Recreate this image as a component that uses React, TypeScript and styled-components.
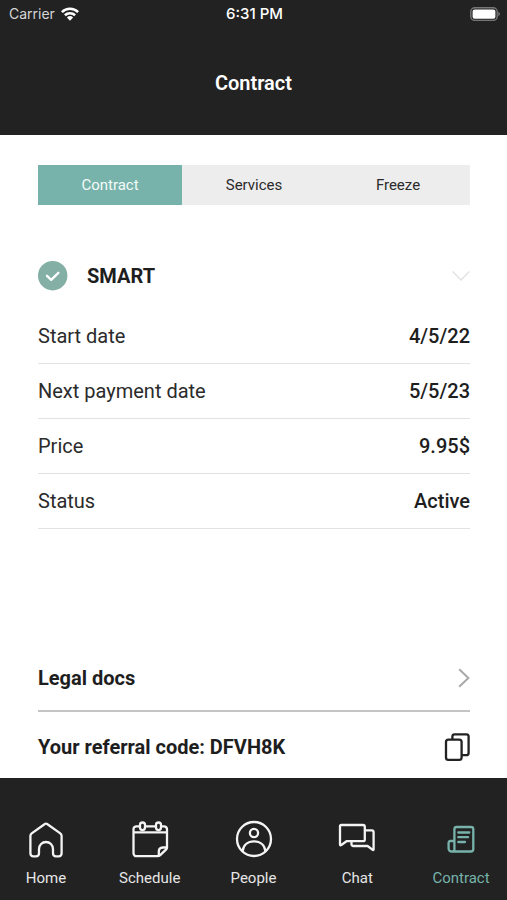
import React from "react";
import styled, { createGlobalStyle } from "styled-components";

const color = {
  dark: "#222222",
  ink: "#2b2b2b",
  strong: "#1e1e1e",
  teal: "#77b3aa",
  badge: "#83afa4",
  tab: "#ededed",
  line: "#e2e2e2",
};

const GlobalStyle = createGlobalStyle`
  * { box-sizing: border-box; }
  body { margin: 0; background: #fff; }
  button { font: inherit; color: inherit; border: 0; padding: 0; background: none; cursor: pointer; }
  h1, h2, dl, dd { margin: 0; }
  svg { display: block; flex: none; }
`;

const Page = styled.div`
  display: flex;
  flex-direction: column;
  min-height: 100vh;
  background: #fff;
  color: ${color.ink};
  font-family: Roboto, "Liberation Sans", sans-serif;
`;

const Header = styled.header`
  height: 135px;
  background: ${color.dark};
  color: #fff;
`;

const StatusBar = styled.div`
  display: grid;
  grid-template-columns: 1fr auto 1fr;
  align-items: center;
  height: 27px;
  padding: 0 7px 0 9px;
  font-family: Inter, sans-serif;
  font-size: 14px;
`;

const Carrier = styled.div`
  display: flex;
  align-items: center;
  gap: 6px;
  color: #d6d6d6;
`;

const Clock = styled.time`
  font-size: 15px;
  font-weight: 500;
`;

const Battery = styled.div`
  justify-self: end;
`;

const Title = styled.h1`
  padding-top: 44px;
  font-size: 20px;
  line-height: 24px;
  font-weight: 600;
  text-align: center;
`;

const Main = styled.main`
  display: flex;
  flex: 1;
  flex-direction: column;
  padding: 30px 37px 0 38px;
`;

const Tabs = styled.div`
  display: grid;
  grid-template-columns: repeat(3, 1fr);
  height: 40px;
  background: ${color.tab};
`;

const Tab = styled.button<{ $active?: boolean }>`
  && {
    background: ${(p) => (p.$active ? color.teal : "transparent")};
    color: ${(p) => (p.$active ? "#f4faf9" : color.ink)};
    font-size: 15px;
  }
`;

const PlanToggle = styled.button`
  display: flex;
  align-items: center;
  height: 32px;
  margin-top: 55px;
`;

const PlanName = styled.h2`
  flex: 1;
  padding-left: 19px;
  color: ${color.strong};
  font-size: 20px;
  font-weight: 700;
  text-align: left;
`;

const Details = styled.dl`
  margin-top: 17px;
`;

const Detail = styled.div`
  display: flex;
  align-items: center;
  justify-content: space-between;
  height: 55px;
  border-bottom: 1px solid ${color.line};
  font-size: 20px;
`;

const Value = styled.dd`
  color: ${color.strong};
  font-weight: 500;
`;

const Extras = styled.section`
  margin-top: auto;
`;

const ExtraRow = styled.button<{ $divided?: boolean }>`
  && {
    display: flex;
    align-items: center;
    justify-content: space-between;
    width: 100%;
    height: 66px;
    padding-top: ${(p) => (p.$divided ? "0" : "3px")};
    border-bottom: ${(p) => (p.$divided ? "2px solid #c4c4c4" : "0")};
    color: ${color.strong};
    font-size: 20px;
    font-weight: 700;
  }
`;

const Nav = styled.nav`
  display: flex;
  justify-content: space-between;
  height: 122px;
  padding: 38px 14px 0;
  background: ${color.dark};
`;

const NavItem = styled.button<{ $active?: boolean }>`
  && {
    display: flex;
    flex-direction: column;
    align-items: center;
    gap: 6px;
    width: 64px;
    height: 74px;
    color: ${(p) => (p.$active ? color.teal : "#e6e6e6")};
    font-size: 15px;
    line-height: 20px;
  }
`;

const NavIcon = styled.svg.attrs({ width: 46, height: 46, viewBox: "0 0 46 46" })`
  fill: none;
  stroke: ${(p) => p.stroke ?? "#f4f4f4"};
  stroke-width: 2.3;
  stroke-linecap: round;
  stroke-linejoin: round;
`;

const HomeIcon = () => (
  <NavIcon aria-hidden="true">
    <path d="M21.5 8.2Q23 7 24.5 8.2L37.3 17.4Q38.6 18.4 38.6 20V37.3Q38.6 40.3 35.6 40.3H33Q30 40.3 30 37.3V33a7 7 0 0 0-14 0V37.3Q16 40.3 13 40.3H10.4Q7.4 40.3 7.4 37.3V20Q7.4 18.4 8.7 17.4Z" />
  </NavIcon>
);

const ScheduleIcon = () => (
  <NavIcon aria-hidden="true">
    <path d="M30.3 40.2H9.5a3 3 0 0 1-3-3V13.3a3 3 0 0 1 3-3H12.4M18.3 10.3H28.6M34.5 10.3H37a3 3 0 0 1 3 3V31.5Q40 32.6 39.2 33.4L33.2 39.2Q32.2 40.2 30.3 40.2M6.5 16.3H40" />
    <rect x="13" y="6.5" width="5" height="7.6" rx="2.5" />
    <rect x="29" y="6.5" width="5" height="7.6" rx="2.5" />
    <path d="M39.5 31.5H35.8Q31.8 31.8 31.8 35.6V39.5" />
  </NavIcon>
);

const PeopleIcon = () => (
  <NavIcon aria-hidden="true">
    <circle cx="23" cy="23" r="17" />
    <circle cx="23" cy="17" r="4.1" />
    <path d="M11.6 35.2C12.2 29.3 16.5 25.3 23 25.3S33.8 29.3 34.4 35.2" />
  </NavIcon>
);

const ChatIcon = () => (
  <NavIcon aria-hidden="true">
    <path d="M7.3 9H29a1.8 1.8 0 0 1 1.8 1.8V23.4a1.8 1.8 0 0 1-1.8 1.8H12.5L7.3 29Q6 29.8 6 28.2V10.5Q6 9 7.3 9Z" />
    <path d="M31 14.4H37.8a1.8 1.8 0 0 1 1.8 1.8V33.2Q39.6 34.5 38.4 33.7L33.6 30H19.3a1.8 1.8 0 0 1-1.8-1.8V25.4" />
  </NavIcon>
);

const ContractIcon = () => (
  <NavIcon aria-hidden="true" stroke={color.teal}>
    <path d="M16.4 35.3V13.3a2.3 2.3 0 0 1 2.3-2.3H33a2.3 2.3 0 0 1 2.3 2.3V33a2.5 2.5 0 0 1-2.5 2.5H13.6a3 3 0 0 1-3-3V26.6a1.6 1.6 0 0 1 1.6-1.6H16.4" />
    <path d="M20.3 16.5H31.3M20.3 21.2H30M20.3 26H27" />
  </NavIcon>
);

const details = [
  ["Start date", "4/5/22"],
  ["Next payment date", "5/5/23"],
  ["Price", "9.95$"],
  ["Status", "Active"],
];

const navItems = [
  { label: "Home", Icon: HomeIcon },
  { label: "Schedule", Icon: ScheduleIcon },
  { label: "People", Icon: PeopleIcon },
  { label: "Chat", Icon: ChatIcon },
  { label: "Contract", Icon: ContractIcon, active: true },
];

export default function App() {
  return (
    <Page>
      <GlobalStyle />
      <Header>
        <StatusBar>
          <Carrier>
            <span>Carrier</span>
            <svg width="18" height="14" viewBox="0 0 18 14" fill="none" stroke="#fff" strokeWidth="2.6" aria-label="Wi-Fi">
              <path d="M.9 5.1a11.6 11.6 0 0 1 16.2 0M3.9 8.3a7.4 7.4 0 0 1 10.2 0" />
              <path d="M9 13.7 5.9 10.5a4.6 4.6 0 0 1 6.2 0Z" fill="#fff" stroke="none" />
            </svg>
          </Carrier>
          <Clock>6:31 PM</Clock>
          <Battery>
            <svg width="30" height="14" viewBox="0 0 30 14" aria-label="Battery full">
              <rect x=".8" y=".8" width="26.4" height="12.6" rx="4" fill="none" stroke="#777" strokeWidth="1.4" />
              <rect x="2.6" y="2.5" width="22.8" height="9.2" rx="2" fill="#fff" />
              <path d="M28.3 4.8Q30 5.7 30 7t-1.7 2.2Z" fill="#777" />
            </svg>
          </Battery>
        </StatusBar>
        <Title>Contract</Title>
      </Header>

      <Main>
        <Tabs role="tablist">
          <Tab role="tab" aria-selected="true" $active>Contract</Tab>
          <Tab role="tab" aria-selected="false">Services</Tab>
          <Tab role="tab" aria-selected="false">Freeze</Tab>
        </Tabs>

        <PlanToggle aria-expanded="true">
          <svg width="30" height="30" viewBox="0 0 30 30" fill="none" aria-hidden="true">
            <circle cx="14.7" cy="14.7" r="14.7" fill={color.badge} />
            <path d="m9 14.8 4.2 4 7.2-7" stroke="#fff" strokeWidth="2.4" strokeLinecap="round" strokeLinejoin="round" />
          </svg>
          <PlanName>SMART</PlanName>
          <svg width="18" height="10" viewBox="0 0 18 10" fill="none" stroke="#e2e2e2" strokeWidth="1.4" aria-hidden="true">
            <path d="m.6.6 8.4 8.4L17.4.6" />
          </svg>
        </PlanToggle>

        <Details>
          {details.map(([label, value]) => (
            <Detail key={label}>
              <dt>{label}</dt>
              <Value>{value}</Value>
            </Detail>
          ))}
        </Details>

        <Extras>
          <ExtraRow $divided>
            <span>Legal docs</span>
            <svg width="12" height="20" viewBox="0 0 12 20" fill="none" stroke="#a9a9a9" strokeWidth="2" aria-hidden="true">
              <path d="m1.2 1.2 9.2 8.8-9.2 8.8" />
            </svg>
          </ExtraRow>
          <ExtraRow>
            <span>Your referral code: DFVH8K</span>
            <svg width="26" height="28" viewBox="0 0 26 28" fill="none" stroke="#222" strokeWidth="2.3" strokeLinejoin="round" aria-hidden="true">
              <rect x="2" y="6.6" width="15.6" height="20.2" rx="2.4" />
              <path d="M8.4 6.4V3.6Q8.4 1.4 10.6 1.4H22.4Q24.6 1.4 24.6 3.6V20Q24.6 22.2 22.4 22.2H18" />
            </svg>
          </ExtraRow>
        </Extras>
      </Main>

      <Nav>
        {navItems.map(({ label, Icon, active }) => (
          <NavItem key={label} $active={active} aria-current={active ? "page" : undefined}>
            <Icon />
            <span>{label}</span>
          </NavItem>
        ))}
      </Nav>
    </Page>
  );
}
